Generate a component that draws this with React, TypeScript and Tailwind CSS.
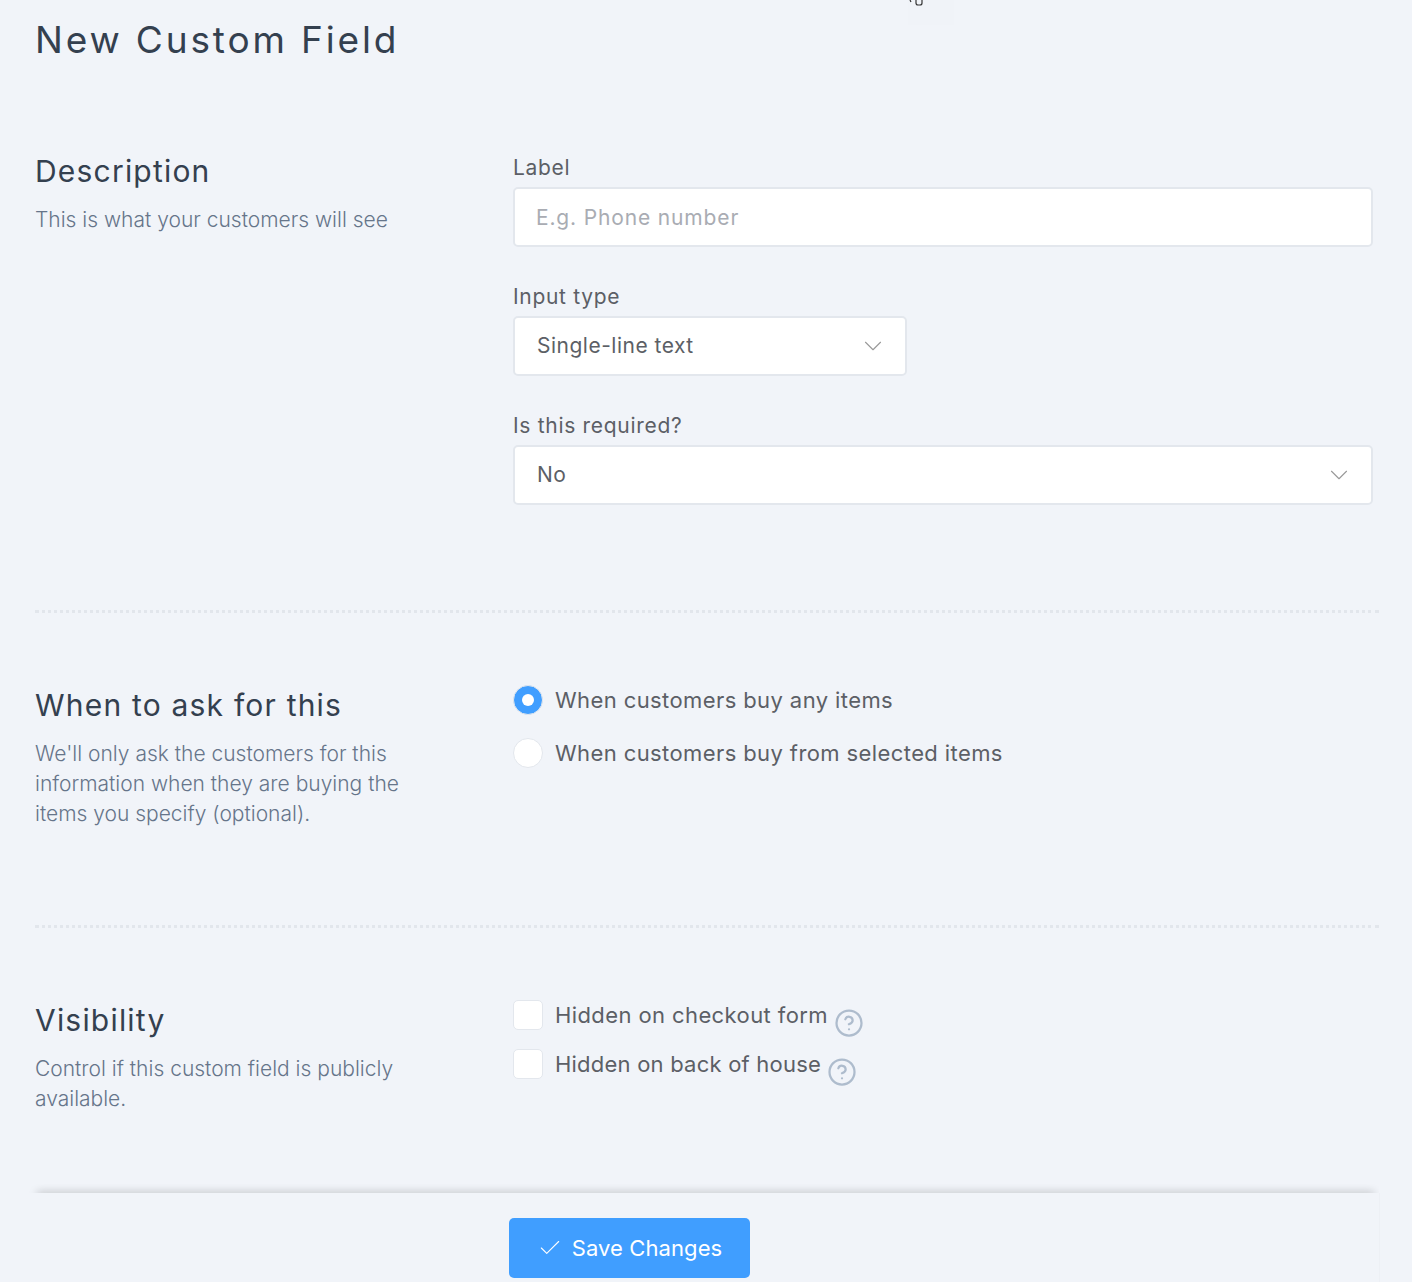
import { Check, ChevronDown, CircleHelp } from "lucide-react";
import type { ReactNode } from "react";

function Section({ title, hint, children }: { title: string; hint: ReactNode; children: ReactNode }) {
  return (
    <section className="flex">
      <div className="w-[478px] shrink-0 pt-[2px]">
        <h2 className="text-[30px] leading-[36px] tracking-[1.2px] text-[#34404f]">{title}</h2>
        <p className="mt-[16px] w-[380px] text-[21px] leading-[30px] font-light text-[#66758a]">{hint}</p>
      </div>
      <div className="flex-1 pr-[6px]">{children}</div>
    </section>
  );
}

function Field({ label, children }: { label: string; children: ReactNode }) {
  return (
    <div>
      <label className="block text-[21px] leading-[24px] tracking-[0.7px] text-[#5c5f66]">{label}</label>
      <div className="mt-[7px]">{children}</div>
    </div>
  );
}

function SelectBox({ value, className }: { value: string; className?: string }) {
  return (
    <div className={`flex h-[60px] items-center justify-between rounded-[5px] border-2 border-[#e3e7ed] bg-white pl-[22px] pr-[17px] ${className ?? ""}`}>
      <span className="text-[21px] tracking-[0.5px] text-[#5c5f66]">{value}</span>
      <ChevronDown size={30} strokeWidth={0.9} className="text-[#999]" />
    </div>
  );
}

function Option({ round, checked, label, help, tight }: { round?: boolean; checked?: boolean; label: string; help?: boolean; tight?: boolean }) {
  return (
    <div className="flex items-start gap-[12px]">
      <span
        className={`flex h-[30px] w-[30px] shrink-0 items-center justify-center border border-[#e3e7ed] ${round ? "rounded-full" : "rounded-[5px]"} ${checked ? "border-[#409eff] bg-[#409eff]" : "bg-white"}`}
      >
        {checked && <span className="h-[12px] w-[12px] rounded-full bg-white" />}
      </span>
      <span className={`text-[22px] leading-[30px] text-[#5c5f66] ${tight ? "tracking-[0.22px]" : "tracking-[0.4px]"}`}>{label}</span>
      {help && <CircleHelp size={30} strokeWidth={1.8} className="mt-[8px] -ml-[6px] text-[#aebccd]" />}
    </div>
  );
}

export default function App() {
  return (
    <div className="relative h-[1282px] overflow-hidden bg-[#f1f4f9] pl-[35px] pr-[33px] font-['Inter',sans-serif]">
      {/* stray cursor in the top of the capture */}
      <div className="pointer-events-none absolute left-[908px] top-0 h-[25px] w-[46px] bg-[#f0f3f8]">
        <svg width="16" height="6" viewBox="0 0 16 6" fill="none" stroke="#333" strokeWidth="1.2">
          <path d="M2 0 L3 2 M8 0 v3 q0 2 2 2 h2 q2 0 2-2 v-3" />
        </svg>
      </div>

      <h1 className="pt-[17px] text-[37px] leading-[46px] tracking-[2.85px] text-[#34404f]">New Custom Field</h1>

      <div className="mt-[88px]">
        <Section title="Description" hint="This is what your customers will see">
          <div className="flex flex-col gap-[38px] pt-[5px]">
            <Field label="Label">
              <input
                placeholder="E.g. Phone number"
                className="h-[60px] w-full rounded-[5px] border-2 border-[#e3e7ed] bg-white px-[21px] text-[21px] tracking-[0.85px] text-[#5c5f66] outline-none placeholder:text-[#a9acb3]"
              />
            </Field>
            <Field label="Input type">
              <SelectBox value="Single-line text" className="w-[394px]" />
            </Field>
            <Field label="Is this required?">
              <SelectBox value="No" />
            </Field>
          </div>
        </Section>
      </div>

      <div className="mt-[105px] border-t-[3px] border-dotted border-[#e2e6ec]" />

      <div className="mt-[72px]">
        <Section
          title="When to ask for this"
          hint="We'll only ask the customers for this information when they are buying the items you specify (optional)."
        >
          <div className="flex flex-col gap-[23px]">
            <Option round checked label="When customers buy any items" />
            <Option round label="When customers buy from selected items" />
          </div>
        </Section>
      </div>

      <div className="mt-[96px] border-t-[3px] border-dotted border-[#e2e6ec]" />

      <div className="mt-[72px]">
        <Section title="Visibility" hint="Control if this custom field is publicly available.">
          <div className="flex flex-col gap-[11px]">
            <Option label="Hidden on checkout form" help />
            <Option label="Hidden on back of house" help tight />
          </div>
        </Section>
      </div>

      <footer className="absolute bottom-0 left-[23px] right-[32px] top-[1193px] border-r border-[#edf0f5]">
        {/* top shadow, clipped at the footer edge */}
        <div className="-mt-[9px] h-[9px] overflow-hidden">
          <div className="ml-[15px] mr-[6px] mt-[9px] h-[4px] shadow-[0_0_8px_1px_rgba(0,0,0,0.22)]" />
        </div>
        <button className="mt-[25px] ml-[486px] flex h-[60px] w-[241px] items-center justify-center gap-[9px] rounded-[5px] bg-[#409eff] text-[22px] tracking-[0.1px] text-white">
          <Check size={26} strokeWidth={1} />
          Save Changes
        </button>
      </footer>
    </div>
  );
}
